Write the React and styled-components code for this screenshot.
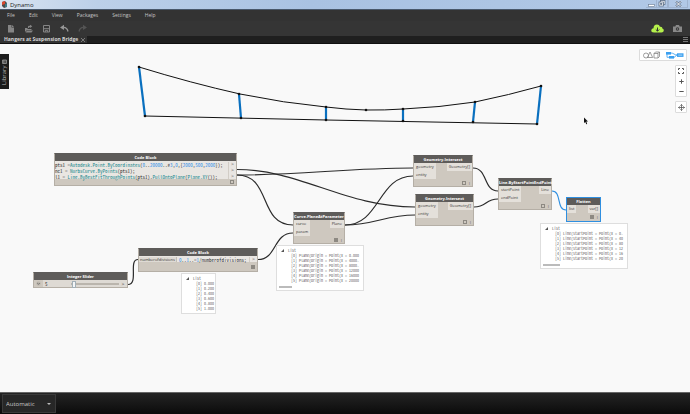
import React, { useState } from 'react';
import styled, { createGlobalStyle, css } from 'styled-components';

const GlobalStyle = createGlobalStyle`
  * {
    box-sizing: border-box;
  }
  body {
    margin: 0;
    font-family: 'Open Sans', 'Noto Sans', sans-serif;
    font-size: 5px;
    color: #333;
  }
  button,
  input,
  select {
    margin: 0;
    padding: 0;
    border: 0;
    background: none;
    font: inherit;
    color: inherit;
  }
  svg {
    display: block;
  }
`;

const MONO = `'Noto Sans Mono CJK SC', 'Liberation Mono', monospace`;

/* ---------- shell ---------- */

const Window = styled.div`
  display: flex;
  flex-direction: column;
  min-height: 100vh;
`;

const TitleBar = styled.header`
  display: flex;
  align-items: center;
  height: 10px;
  padding: 0 2px;
  gap: 3px;
  border-bottom: 1px solid #49586b;
  background: linear-gradient(90deg, #d9e3f0 0, #bcd0e9 14%, #a9c2e2 45%, #b1c8e6 100%);
  color: #222;
  font-size: 6px;
  line-height: 8px;
`;

const WindowButtons = styled.div`
  display: flex;
  margin-left: auto;
  height: 8px;
  align-self: flex-start;
`;

const WindowButton = styled.button`
  display: flex;
  align-items: center;
  justify-content: center;
  width: ${props => (props.$wide ? '20px' : '11px')};
  border: 1px solid #9fb3cf;
  border-top: 0;
  border-left-width: ${props => (props.$wide ? '1px' : 0)};
`;

const MenuBar = styled.nav`
  display: flex;
  gap: 14px;
  height: 11px;
  padding: 0 7px;
  background: #333;
  color: #c4c4c4;
  line-height: 11px;
`;

const Toolbar = styled.div`
  display: flex;
  align-items: center;
  gap: 9px;
  height: 15px;
  padding: 0 8px 0 6px;
  background: #353535;
`;

const ToolButton = styled.button`
  display: block;
  margin-left: ${props => (props.$push ? 'auto' : 0)};
`;

const TabStrip = styled.div`
  display: flex;
  align-items: stretch;
  height: 8px;
  border-bottom: 1px solid #111;
  background: #1f1f1f;
`;

const Tab = styled.div`
  display: flex;
  align-items: center;
  gap: 3px;
  padding: 0 2px 0 4px;
  background: #333;
  color: #d6d6d6;
  font-weight: 700;
  line-height: 7px;
`;

const TabMenu = styled.button`
  display: flex;
  align-items: center;
  margin-left: auto;
  padding: 0 2px;
`;

const Canvas = styled.main`
  position: relative;
  flex: 1;
  overflow: hidden;
  background: #f9f9f9;
`;

const StatusBar = styled.footer`
  display: flex;
  height: 22px;
  padding: 1px 2px;
  border-top: 1px solid #666;
  background: linear-gradient(#242424, #0b0b0b);
`;

const RunMode = styled.label`
  position: relative;
  display: flex;
  width: 54px;
  border: 1px solid #3a3a3a;
  background: #272727;
  &::after {
    content: '';
    position: absolute;
    right: 4px;
    top: 8px;
    border: 2px solid transparent;
    border-top-color: #bbb;
    pointer-events: none;
  }
  select {
    width: 100%;
    padding-left: 3px;
    appearance: none;
    color: #c8c8c8;
    font-size: 6px;
  }
`;

/* ---------- canvas overlays ---------- */

const Drawing = styled.svg`
  position: absolute;
  left: 0;
  top: 0;
  overflow: visible;
`;

const LibraryTab = styled.button`
  position: absolute;
  left: 0;
  top: 10px;
  display: flex;
  align-items: center;
  justify-content: space-between;
  width: 9px;
  padding: 4px 0 5px;
  height: 35px;
  background: #1c1c1c;
  color: #b5b5b5;
  font-size: 6px;
  line-height: 9px;
  writing-mode: vertical-rl;
  transform: rotate(180deg);
`;

const ViewControls = styled.div`
  position: absolute;
  top: 5px;
  right: 3px;
  display: flex;
  flex-direction: column;
  align-items: flex-end;
  gap: 4px;
`;

const ControlGroup = styled.div`
  display: flex;
  flex-direction: ${props => (props.$column ? 'column' : 'row')};
  border: 1px solid #dcdcdc;
  border-radius: 1px;
  background: #fff;
`;

const ControlButton = styled.button`
  display: flex;
  align-items: center;
  justify-content: center;
  width: ${props => (props.$wide ? '23px' : '10px')};
  height: 10px;
  & + & {
    border-left: ${props => (props.$wide ? '1px solid #dcdcdc' : 0)};
  }
`;

/* ---------- nodes ---------- */

const NodeBox = styled.section`
  position: absolute;
  left: ${props => props.$x}px;
  top: ${props => props.$y}px;
  width: ${props => props.$w}px;
  border: 1px solid #b5afa6;
  border-top-color: #5e5c5a;
  background: #cec8bf;
  ${props =>
    props.$selected &&
    css`
      border-color: #2f8fe0;
    `}
`;

const NodeTitle = styled.h2`
  margin: 0;
  background: #5e5c5a;
  color: #fff;
  font-size: 4px;
  font-weight: 700;
  line-height: 7px;
  text-align: center;
  white-space: nowrap;
`;

const Ports = styled.div`
  display: flex;
  justify-content: space-between;
  align-items: flex-start;
`;

const PortList = styled.ul`
  margin: 0;
  padding: 0;
  list-style: none;
  min-width: ${props => props.$min || 0}px;
`;

const Port = styled.li`
  padding: 0 2px;
  background: #e4e0da;
  font-size: 4px;
  line-height: 8px;
  white-space: nowrap;
`;

const NodeFoot = styled.div`
  display: flex;
  align-items: center;
  justify-content: flex-end;
  gap: 3px;
  height: ${props => props.$h || 7}px;
  padding-right: 2px;
  color: #777;
  line-height: 6px;
`;

const PreviewMark = styled.i`
  width: 4px;
  height: 4px;
  border: 1px solid #8d8982;
  background: ${props => (props.$on ? '#8d8982' : 'none')};
`;

const CodeRow = styled.div`
  display: flex;
  padding-top: 1px;
  background: #e9e6e2;
`;

const Code = styled.pre`
  display: flex;
  flex-direction: column;
  gap: 1px;
  flex: 1;
  margin: 0;
  padding-left: ${props => (props.$indent ? '2px' : 0)};
  font-family: ${MONO};
  font-size: 5px;
  line-height: 5px;
  color: #333;
  b {
    font-weight: 400;
    color: #23898f;
  }
  i {
    font-style: normal;
    color: #2f8fe8;
  }
`;

const CodePorts = styled.div`
  display: flex;
  flex-direction: column;
  gap: 1px;
  width: 8px;
  border-left: 1px solid #d2cdc6;
  line-height: 5px;
  text-align: center;
  color: #555;
`;

const CodeInput = styled.div`
  width: 38px;
  padding-left: 1px;
  border-right: 1px solid #c4beb5;
  background: #dedad4;
  line-height: 5px;
  font-size: 4px;
`;

const SliderRow = styled.div`
  display: flex;
  align-items: center;
  height: 7px;
  background: #dedad4;
  button {
    width: 9px;
    height: 7px;
    background: #cec8bf;
    line-height: 5px;
    svg {
      margin: 0 auto;
    }
  }
  output {
    width: 28px;
    padding-left: 2px;
    font-family: ${MONO};
    line-height: 7px;
  }
  input {
    flex: 1;
    min-width: 0;
    height: 7px;
    appearance: none;
  }
  input::-webkit-slider-runnable-track {
    height: 2px;
    border: 1px solid #bab5ad;
    background: #e9e6e2;
  }
  input::-webkit-slider-thumb {
    appearance: none;
    width: 4px;
    height: 7px;
    margin-top: -3px;
    border: 1px solid #a3b0b8;
    background: #f4f6f7;
  }
  span {
    width: 8px;
    text-align: center;
  }
`;

const Preview = styled.div`
  position: absolute;
  left: ${props => props.$x}px;
  top: ${props => props.$y}px;
  width: ${props => props.$w}px;
  padding: 2px 0 2px 2px;
  border: 1px solid #dedede;
  background: #fff;
  color: #666;
  font-family: ${MONO};
  font-size: 4px;
  line-height: 5px;
  ol {
    margin: 0;
    padding: 0 0 0 12px;
    list-style: none;
    white-space: pre;
  }
`;

const PreviewHead = styled.div`
  display: flex;
  align-items: center;
  gap: 4px;
  padding-left: 2px;
`;

const ScrollThumb = styled.div`
  width: ${props => props.$w}px;
  height: 2px;
  margin-top: 3px;
  background: #bbb;
`;

/* ---------- data (canvas coordinates) ---------- */

const menus = ['File', 'Edit', 'View', 'Packages', 'Settings', 'Help'];

const nodes = [
  {
    title: 'Curve.PlaneAtParameter',
    x: 293, y: 168, w: 52,
    inputs: ['curve', 'param'], outputs: ['Plane'], min: 16, on: true,
  },
  {
    title: 'Geometry.Intersect',
    x: 413, y: 111, w: 60,
    inputs: ['geometry', 'entity'], outputs: ['Geometry[]'], min: 21,
  },
  {
    title: 'Geometry.Intersect',
    x: 415, y: 150, w: 59,
    inputs: ['geometry', 'entity'], outputs: ['Geometry[]'], min: 21,
  },
  {
    title: 'Line.ByStartPointEndPoint',
    x: 498, y: 134, w: 54,
    inputs: ['startPoint', 'endPoint'], outputs: ['Line'], min: 21,
  },
  {
    title: 'Flatten',
    x: 566, y: 153, w: 35,
    inputs: ['list'], outputs: ['var[]'], min: 9, on: true, selected: true,
  },
];

const previews = [
  {
    x: 181, y: 229, w: 35,
    rows: ['0.000', '0.200', '0.400', '0.600', '0.800', '1.000'],
  },
  {
    x: 276, y: 201, w: 88, thumb: 13,
    rows: ['0.000', '4000.', '8000.', '12000', '16000', '20000'].map(
      v => `Plane(Origin = Point(X = ${v}`
    ),
  },
  {
    x: 540, y: 179, w: 88, thumb: 17,
    rows: ['0.', '40', '80', '12', '16', '20'].map(
      v => `Line(StartPoint = Point(X = ${v}`
    ),
  },
];

const hangers = [
  [139, 23, 145, 72],
  [239, 50, 241, 74],
  [326, 63, 326, 76],
  [403, 65, 403, 77],
  [475, 58, 473, 78],
  [541, 42, 537, 80],
];

const wires = [
  'M237 125.5 C300 125.5 345 163 415 163',
  'M237 131 C300 131 350 124 413 124',
  'M237 131 C272 131 258 181 293 181',
  'M258 215.5 C277 215.5 273 189 293 189',
  'M128 240.5 C139 240.5 128 215.5 138 215.5',
  'M345 181 C380 181 378 132 413 132',
  'M345 181 C375 181 385 171 415 171',
  'M473 124 C488 124 483 147 498 147',
  'M474 163 C487 163 485 155 498 155',
];

/* ---------- parts ---------- */

const Bridge = () => (
  <g>
    <g stroke="#0a70bf" strokeWidth="2.2">
      {hangers.map(([x1, y1, x2, y2]) => (
        <line key={x1} x1={x1} y1={y1} x2={x2} y2={y2} />
      ))}
    </g>
    <path
      d="M139 23 Q191 39 240 50 Q284 59 326 63 Q346 65.5 366 66 Q385 66.3 403 65 Q439 63.5 475 58 Q509 51 541 42 M145 72 L326 76 L537 80"
      fill="none"
      stroke="#111"
      strokeWidth="1"
    />
    {hangers.map(([x1, y1, x2, y2]) => (
      <g key={x1} fill="#111">
        <circle cx={x1} cy={y1} r="1.3" />
        <circle cx={x2} cy={y2} r="1.3" />
      </g>
    ))}
    <circle cx="366" cy="66" r="1.3" fill="#111" />
  </g>
);

const Node = ({ node }) => (
  <NodeBox $x={node.x} $y={node.y} $w={node.w} $selected={node.selected}>
    <NodeTitle>{node.title}</NodeTitle>
    <Ports>
      <PortList $min={node.min}>
        {node.inputs.map(name => (
          <Port key={name}>{name}</Port>
        ))}
      </PortList>
      <PortList>
        {node.outputs.map(name => (
          <Port key={name}>{name}</Port>
        ))}
      </PortList>
    </Ports>
    <NodeFoot $h={node.selected ? 8 : 7}>
      <PreviewMark $on={node.on} />
      <span>ı</span>
    </NodeFoot>
  </NodeBox>
);

const SliderNode = () => {
  const [value, setValue] = useState(5);
  return (
    <NodeBox $x={33} $y={228} $w={95}>
      <NodeTitle id="slider-title">Integer Slider</NodeTitle>
      <SliderRow>
        <button aria-label="Slider settings">
          <svg width="5" height="5" viewBox="0 0 5 5">
            <circle cx="2.5" cy="2.5" r="2.2" fill="#bdb7ae" />
            <path d="M1.2 2 L2.5 3.3 L3.8 2" fill="none" stroke="#555" strokeWidth=".7" />
          </svg>
        </button>
        <output>{value}</output>
        <input
          type="range"
          min="5"
          max="100"
          value={value}
          aria-labelledby="slider-title"
          onChange={e => setValue(Number(e.target.value))}
        />
        <span>&gt;</span>
      </SliderRow>
    </NodeBox>
  );
};

const App = () => (
  <Window>
    <GlobalStyle />
    <TitleBar>
      <svg width="5" height="7" viewBox="0 0 5 7">
        <path d="M0 1 L3 0 L5 2 V6 L2 7 L0 5Z" fill="#4c4a4a" />
        <path d="M0 1 L3 0 L3 3 L0 4Z" fill="#d9472f" />
        <path d="M3 3 L5 2 V6 L3 6Z" fill="#3d7d8b" />
      </svg>
      <span>Dynamo</span>
      <WindowButtons>
        <WindowButton aria-label="Minimize">
          <svg width="7" height="6">
            <rect x=".5" y="3.5" width="6" height="2" fill="#fff" stroke="#687990" strokeWidth=".6" />
          </svg>
        </WindowButton>
        <WindowButton aria-label="Restore">
          <svg width="8" height="7" fill="#fff" stroke="#596b84" strokeWidth=".8">
            <rect x="2.5" y=".5" width="4.5" height="4" />
            <rect x="1" y="2" width="4.5" height="4" />
            <rect x="2.6" y="3.5" width="1.3" height="1" />
          </svg>
        </WindowButton>
        <WindowButton $wide aria-label="Close">
          <svg width="7" height="6" fill="none">
            <path d="M1 .5 L6 5.5 M6 .5 L1 5.5" stroke="#596b84" strokeWidth="2" />
            <path d="M1 .5 L6 5.5 M6 .5 L1 5.5" stroke="#fff" strokeWidth="1" />
          </svg>
        </WindowButton>
      </WindowButtons>
    </TitleBar>
    <MenuBar>
      {menus.map(name => (
        <button key={name}>{name}</button>
      ))}
    </MenuBar>
    <Toolbar>
      <ToolButton aria-label="New">
        <svg width="9" height="9" fill="#858585">
          <path d="M2 1 H5.5 V3.5 H8 V8.5 H2Z M6 1 L8 3 H6Z" />
        </svg>
      </ToolButton>
      <ToolButton aria-label="Open">
        <svg width="9" height="9" fill="#858585">
          <path d="M1 4 H3 L4 5 H7.5 V6 H3 L1 8Z M3 6.4 H9 L7.5 8.5 H1.5Z M4 4 V2.8 Q4 1.8 5 1.8 H6 V.8 L8.3 2.3 L6 4 V3 H5.3 V4Z" />
        </svg>
      </ToolButton>
      <ToolButton aria-label="Save">
        <svg width="9" height="9" fill="none" stroke="#858585">
          <path d="M1.5 1.5 H7.5 V8 H1.5Z M1.5 4.7 H7.5 M3.3 8 V6.4 H5.7 V8" />
        </svg>
      </ToolButton>
      <ToolButton aria-label="Undo">
        <svg width="9" height="9">
          <path d="M3 3.4 Q7 3 8 7.5" fill="none" stroke="#969696" strokeWidth="1.3" />
          <path d="M0 3.5 L4 .8 V6Z" fill="#969696" />
        </svg>
      </ToolButton>
      <ToolButton aria-label="Redo">
        <svg width="9" height="9">
          <path d="M6 3.4 Q2 3 1 7.5" fill="none" stroke="#545454" strokeWidth="1.3" />
          <path d="M9 3.5 L5 .8 V6Z" fill="#545454" />
        </svg>
      </ToolButton>
      <ToolButton $push aria-label="Updates">
        <svg width="13" height="9">
          <path
            d="M3 8.5 Q0 8.5 .3 6 Q.7 4.3 2.5 4.3 Q2.5 .6 6 .5 Q8.3 .5 9 2.7 Q11.5 2.3 11.4 4.6 Q13 5 12.8 6.8 Q12.5 8.5 10.5 8.5Z"
            fill="#b5f04c"
          />
          <path d="M6.5 3.5 V7 M4.8 5.5 L6.5 7.2 L8.2 5.5" fill="none" stroke="#333" strokeWidth="1" />
        </svg>
      </ToolButton>
      <ToolButton aria-label="Export image">
        <svg width="9" height="9">
          <path d="M0 2.5 H2.3 L3 1 H6 L6.7 2.5 H9 V8 H0Z" fill="#888" />
          <circle cx="4.5" cy="5" r="1.7" fill="#353535" />
          <circle cx="4.5" cy="5" r=".8" fill="#888" />
        </svg>
      </ToolButton>
    </Toolbar>
    <TabStrip>
      <Tab>
        <span>Hangers at Suspension Bridge</span>
        <button aria-label="Close tab">
          <svg width="4" height="4">
            <path d="M0 0 L4 4 M4 0 L0 4" stroke="#999" strokeWidth=".7" />
          </svg>
        </button>
      </Tab>
      <TabMenu aria-label="Tab list">
        <svg width="5" height="5" stroke="#777">
          <path d="M0 .5 H5 M0 2.5 H5 M0 4.5 H5" />
        </svg>
      </TabMenu>
    </TabStrip>
    <Canvas>
      <Drawing width="1" height="1">
        <Bridge />
        <g fill="none" stroke="#2b2b2b" strokeWidth="1.2">
          {wires.map(d => (
            <path key={d} d={d} />
          ))}
          <path d="M552 147 C562 147 556 166 566 166" stroke="#2f8fe0" />
        </g>
      </Drawing>

      <NodeBox $x={54} $y={109} $w={183}>
        <NodeTitle>Code Block</NodeTitle>
        <CodeRow>
          <Code>
            <span>
              pts1 =<b>Autodesk.Point.ByCoordinates</b>(<i>0</i>..<i>20000</i>..#<i>3</i>,<i>0</i>,{'{'}
              <i>2000</i>,<i>500</i>,<i>2000</i>
              {'}'});
            </span>
            <span>
              nc1 = <b>NurbsCurve.ByPoints</b>(pts1);
            </span>
            <span>
              l1 = <b>Line.ByBestFitThroughPoints</b>(pts1).<b>PullOntoPlane</b>(<b>Plane.XY</b>());
            </span>
          </Code>
          <CodePorts>
            <span>&gt;</span>
            <span>&gt;</span>
            <span>&gt;</span>
          </CodePorts>
        </CodeRow>
        <NodeFoot $h={6}>
          <PreviewMark />
        </NodeFoot>
      </NodeBox>

      <NodeBox $x={138} $y={204} $w={120}>
        <NodeTitle>Code Block</NodeTitle>
        <CodeRow>
          <CodeInput>numberofdivisions</CodeInput>
          <Code $indent>
            <span>
              <i>0</i>..<i>1</i>..=<i>1</i>/numberofdivisions;
            </span>
          </Code>
          <CodePorts>
            <span>&gt;</span>
          </CodePorts>
        </CodeRow>
        <NodeFoot $h={9}>
          <PreviewMark $on />
        </NodeFoot>
      </NodeBox>

      <SliderNode />

      {nodes.map(node => (
        <Node key={`${node.title}-${node.y}`} node={node} />
      ))}

      {previews.map(preview => (
        <Preview key={preview.x} $x={preview.x} $y={preview.y} $w={preview.w}>
          <PreviewHead>
            <svg width="3" height="3">
              <path d="M3 0 V3 H0Z" fill="#555" />
            </svg>
            <span>List</span>
          </PreviewHead>
          <ol>
            {preview.rows.map((row, i) => (
              <li key={row}>{`[${i}] ${row}`}</li>
            ))}
          </ol>
          {preview.thumb && <ScrollThumb $w={preview.thumb} />}
        </Preview>
      ))}

      <LibraryTab>
        <span>Library</span>
        <svg width="5" height="5" fill="none" stroke="#999" strokeWidth=".8">
          <path d="M.5 .5 H4.5 V4 H.5Z M2 .5 V4 M3.3 .5 V4" />
        </svg>
      </LibraryTab>

      <ViewControls>
        <ControlGroup>
          <ControlButton $wide aria-label="3D navigation">
            <svg width="17" height="8" fill="none" stroke="#777" strokeWidth=".7">
              <circle cx="3" cy="4.5" r="2.5" />
              <path d="M7 1 L9.7 6.5 H4.5Z" />
              <path d="M11 2.5 H15 V7 H11Z M11 2.5 L12.5 1 H16.5 V5.5 L15 7 M15 2.5 L16.5 1" />
            </svg>
          </ControlButton>
          <ControlButton $wide aria-label="Graph navigation">
            <svg width="18" height="8" fill="#3ba0f0">
              <rect x="0" y="1" width="5" height="2.6" />
              <rect x="3" y="5" width="5" height="2.6" />
              <rect x="11" y="2.3" width="6.5" height="3.6" />
              <path d="M5 2 C8 2 8 4 11 4 M8 6.3 C10 6.3 9 4 11 4 M1 3 V6.3 H3" fill="none" stroke="#3ba0f0" strokeWidth=".8" />
              <path d="M12.3 4.1 H16.3" stroke="#fff" strokeWidth=".6" />
            </svg>
          </ControlButton>
        </ControlGroup>
        <ControlGroup $column>
          <ControlButton aria-label="Zoom to fit">
            <svg width="6" height="6" fill="none" stroke="#555">
              <path d="M.5 2 V.5 H2 M4 .5 H5.5 V2 M5.5 4 V5.5 H4 M2 5.5 H.5 V4" />
            </svg>
          </ControlButton>
          <ControlButton aria-label="Zoom in">
            <svg width="5" height="5" stroke="#555">
              <path d="M2.5 .3 V4.7 M.3 2.5 H4.7" />
            </svg>
          </ControlButton>
          <ControlButton aria-label="Zoom out">
            <svg width="5" height="5" stroke="#555">
              <path d="M.3 2.5 H4.7" />
            </svg>
          </ControlButton>
        </ControlGroup>
        <ControlGroup>
          <ControlButton aria-label="Pan">
            <svg width="7" height="7" fill="none" stroke="#555" strokeWidth=".8">
              <path d="M3.5 .5 V6.5 M.5 3.5 H6.5 M2.4 1.6 L3.5 .5 L4.6 1.6 M2.4 5.4 L3.5 6.5 L4.6 5.4 M1.6 2.4 L.5 3.5 L1.6 4.6 M5.4 2.4 L6.5 3.5 L5.4 4.6" />
            </svg>
          </ControlButton>
        </ControlGroup>
      </ViewControls>

      <Drawing width="1" height="1">
        <path d="M584 73.5 V79 L585.3 78 L586.3 80.3 L587.2 79.9 L586.3 77.6 H588Z" fill="#111" />
      </Drawing>
    </Canvas>
    <StatusBar>
      <RunMode>
        <select aria-label="Run mode" defaultValue="Automatic">
          <option>Automatic</option>
          <option>Manual</option>
        </select>
      </RunMode>
    </StatusBar>
  </Window>
);

export default App;
